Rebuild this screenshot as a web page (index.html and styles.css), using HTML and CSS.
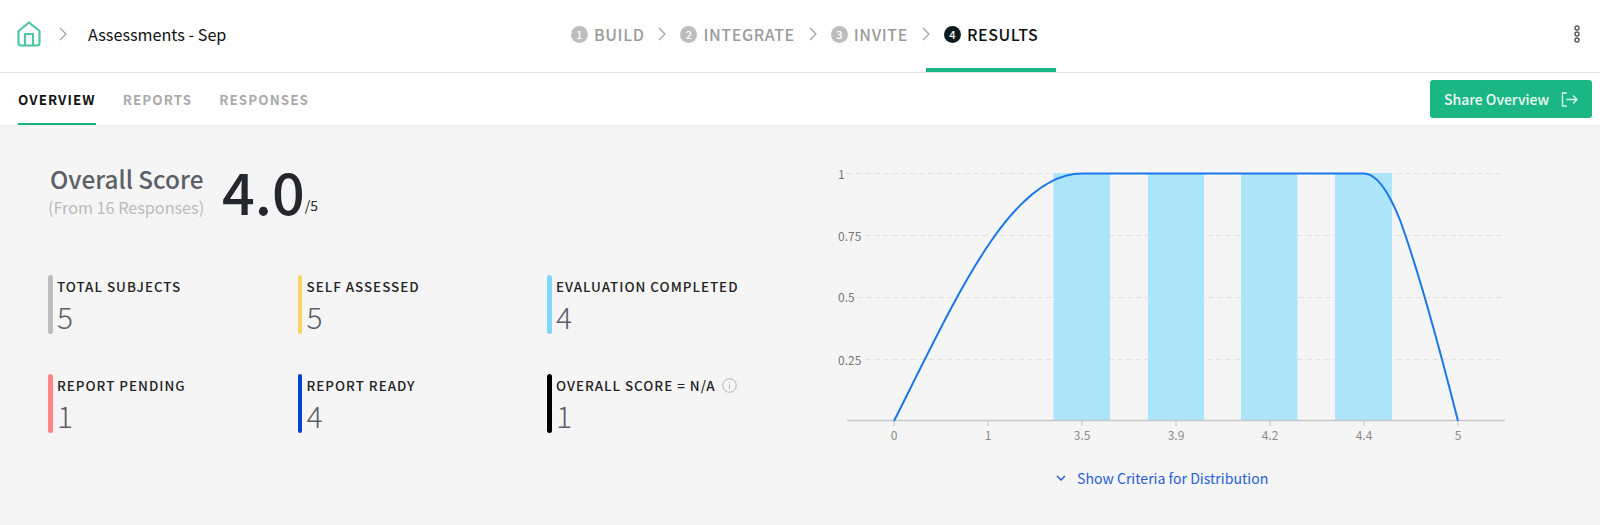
FILE: index.html
```html
<!DOCTYPE html>
<html lang="en">
<head>
    <meta charset="UTF-8">
    <meta name="viewport" content="width=device-width, initial-scale=1.0">
    <title>Assessments - Sep</title>
    <link rel="stylesheet" href="styles.css">
</head>
<body>

<header class="top-bar">
    <div class="crumbs">
        <svg class="home-icon" width="24" height="26" viewBox="0 0 24 26" fill="none" stroke="#4fc79c" stroke-width="2.2" stroke-linejoin="round">
            <path d="M12 1.5 L22.5 10 V22 Q22.5 24.5 20 24.5 H4 Q1.5 24.5 1.5 22 V10 Z"/>
            <path d="M8 24.5 V13 H16 V24.5"/>
        </svg>
        <svg class="chevron crumb-chevron" width="8" height="14" viewBox="0 0 8 14"><path d="M1 1 L7 7 L1 13"/></svg>
        <span class="crumb-title">Assessments - Sep</span>
    </div>

    <nav class="steps">
        <div class="step"><span class="step-num">1</span>BUILD</div>
        <svg class="chevron" width="8" height="14" viewBox="0 0 8 14"><path d="M1 1 L7 7 L1 13"/></svg>
        <div class="step"><span class="step-num">2</span>INTEGRATE</div>
        <svg class="chevron" width="8" height="14" viewBox="0 0 8 14"><path d="M1 1 L7 7 L1 13"/></svg>
        <div class="step"><span class="step-num">3</span>INVITE</div>
        <svg class="chevron" width="8" height="14" viewBox="0 0 8 14"><path d="M1 1 L7 7 L1 13"/></svg>
        <div class="step active"><span class="step-num">4</span>RESULTS</div>
    </nav>

    <svg class="more-icon" width="8" height="18" viewBox="0 0 8 18" fill="none" stroke="#55595f" stroke-width="1.4">
        <circle cx="4" cy="3" r="2"/>
        <circle cx="4" cy="9" r="2"/>
        <circle cx="4" cy="15" r="2"/>
    </svg>
</header>

<div class="sub-bar">
    <div class="tabs">
        <a class="tab active">OVERVIEW</a>
        <a class="tab">REPORTS</a>
        <a class="tab">RESPONSES</a>
    </div>
    <button class="share-button">Share Overview
        <svg width="17" height="15" viewBox="0 0 17 15" fill="none" stroke="#d5f2e8" stroke-width="1.4">
            <path d="M6 1 H1.5 V14 H6"/>
            <path d="M5.5 7.5 H16 M12 3.5 L16 7.5 L12 11.5"/>
        </svg>
    </button>
</div>

<main class="content">
    <section class="summary">
        <div class="score">
            <div class="score-text">
                <div class="score-title">Overall Score</div>
                <div class="score-sub">(From 16 Responses)</div>
            </div>
            <div class="score-value">4.0</div>
            <div class="score-max">/5</div>
        </div>

        <div class="stats">
            <div class="stat stat-grey">
                <div>
                    <div class="stat-label">TOTAL SUBJECTS</div>
                    <div class="stat-value">5</div>
                </div>
            </div>
            <div class="stat stat-yellow">
                <div>
                    <div class="stat-label">SELF ASSESSED</div>
                    <div class="stat-value">5</div>
                </div>
            </div>
            <div class="stat stat-sky">
                <div>
                    <div class="stat-label">EVALUATION COMPLETED</div>
                    <div class="stat-value">4</div>
                </div>
            </div>
            <div class="stat stat-pink">
                <div>
                    <div class="stat-label">REPORT PENDING</div>
                    <div class="stat-value">1</div>
                </div>
            </div>
            <div class="stat stat-blue">
                <div>
                    <div class="stat-label">REPORT READY</div>
                    <div class="stat-value">4</div>
                </div>
            </div>
            <div class="stat stat-black">
                <div>
                    <div class="stat-label">OVERALL SCORE = N/A
                        <svg class="info-icon" width="15" height="15" viewBox="0 0 15 15" fill="none" stroke="#b5b5b5">
                            <circle cx="7.5" cy="7.5" r="6.8"/>
                            <path d="M7.5 6.5 V11 M7.5 4 V5"/>
                        </svg>
                    </div>
                    <div class="stat-value">1</div>
                </div>
            </div>
        </div>
    </section>

    <section class="chart-panel">
        <svg class="chart" width="680" height="300" viewBox="830 150 680 300">
            <g class="grid">
                <path d="M847 173.5 H1502"/>
                <path d="M865 235.5 H1502"/>
                <path d="M857 297.5 H1502"/>
                <path d="M865 359.5 H1502"/>
            </g>
            <g class="bars">
                <rect x="1053.5" y="173" width="56.5" height="248"/>
                <rect x="1148" y="173" width="56" height="248"/>
                <rect x="1241" y="173" width="56.5" height="248"/>
                <rect x="1335" y="173" width="57" height="248"/>
            </g>
            <g class="axis">
                <path class="axis-line" d="M847 420.5 H1505"/>
                <path d="M894 421 V426 M988 421 V426 M1082 421 V426 M1176 421 V426 M1270 421 V426 M1364 421 V426 M1458 421 V426"/>
            </g>
            <path class="curve" d="M894 421 C955 300 1010 173.5 1082 173.5 H1364 C1378 173.5 1390 195 1400 220 C1420 275 1440 350 1458 421"/>
            <g class="y-labels">
                <text x="838" y="179">1</text>
                <text x="838" y="241">0.75</text>
                <text x="838" y="302">0.5</text>
                <text x="838" y="365">0.25</text>
            </g>
            <g class="x-labels">
                <text x="894" y="440">0</text>
                <text x="988" y="440">1</text>
                <text x="1082" y="440">3.5</text>
                <text x="1176" y="440">3.9</text>
                <text x="1270" y="440">4.2</text>
                <text x="1364" y="440">4.4</text>
                <text x="1458" y="440">5</text>
            </g>
        </svg>
        <a class="criteria-link">
            <svg width="10" height="6" viewBox="0 0 10 6" fill="none" stroke="#2460d8" stroke-width="1.5"><path d="M1 1 L5 5 L9 1"/></svg>
            Show Criteria for Distribution
        </a>
    </section>
</main>

</body>
</html>
```

FILE: styles.css
```css
* {
    box-sizing: border-box;
}

html, body {
    height: 100%;
}

body {
    margin: 0;
    background-color: #f5f5f5;
    color: #111;
    font-family: 'Noto Sans CJK SC', 'Noto Sans', sans-serif;
    display: flex;
    flex-direction: column;
    overflow: hidden;
}

.top-bar {
    height: 73px;
    flex: none;
    background-color: #fff;
    border-bottom: 1px solid #e4e4e4;
    display: flex;
    align-items: center;
    padding: 0 0 4px 17px;
}

.crumbs {
    width: 554px;
    display: flex;
    align-items: center;
    flex: none;
}

.crumb-title {
    font-size: 16.2px;
    line-height: 24px;
    color: #111;
    margin-left: 21px;
}

.crumb-chevron {
    margin-left: 18px;
}

.chevron {
    flex: none;
    fill: none;
    stroke: #9a9a9a;
    stroke-width: 1.1;
}

.steps {
    display: flex;
    align-items: center;
    align-self: stretch;
    gap: 14px;
    margin-bottom: -4px;
    padding-bottom: 4px;
}

.step {
    display: flex;
    align-items: center;
    font-size: 16px;
    font-weight: 500;
    letter-spacing: 0.6px;
    color: #9b9b9b;
}

.step-num {
    flex: none;
    width: 17px;
    height: 17px;
    border-radius: 50%;
    background-color: #bdbdbd;
    color: #fff;
    font-size: 11px;
    letter-spacing: 0;
    line-height: 17px;
    text-align: center;
    margin-right: 6px;
}

.step.active {
    color: #111;
    align-self: stretch;
    border-bottom: 4px solid #1ab585;
    margin: 0 0 -4px -18px;
    padding-left: 18px;
    width: 130px;
}

.step.active .step-num {
    background-color: #0d1c20;
}

.more-icon {
    margin-left: auto;
    margin-right: 19px;
}

.sub-bar {
    height: 53px;
    flex: none;
    background-color: #fff;
    border-bottom: 1px solid #ececec;
    display: flex;
    align-items: center;
    justify-content: space-between;
    padding: 0 8px 0 18px;
}

.tabs {
    display: flex;
    align-self: stretch;
    gap: 27px;
}

.tab {
    display: flex;
    align-items: center;
    font-size: 13.4px;
    font-weight: 700;
    letter-spacing: 1.1px;
    color: #aaa;
    padding-top: 1px;
    padding-bottom: 2px;
}

.tab.active {
    color: #111;
    border-bottom: 2px solid #1ab585;
    padding-bottom: 0;
}

.share-button {
    width: 162px;
    height: 38px;
    background-color: #1ab785;
    color: #eefaf6;
    border: none;
    border-radius: 3px;
    font-family: inherit;
    font-size: 14px;
    font-weight: 500;
    display: flex;
    align-items: center;
    justify-content: center;
    gap: 12px;
}

.content {
    flex: 1;
    display: flex;
}

.summary {
    width: 830px;
    flex: none;
    padding: 36px 0 0 48px;
}

.score {
    display: flex;
    align-items: flex-start;
}

.score-text {
    width: 174px;
}

.score-title {
    font-size: 24.3px;
    line-height: 34px;
    font-weight: 500;
    color: #5b6068;
    margin-left: 2px;
}

.score-sub {
    font-size: 16.2px;
    line-height: 22px;
    color: #bbb;
}

.score-value {
    font-size: 57.5px;
    line-height: 56px;
    font-weight: 500;
    color: #24272c;
}

.score-max {
    font-size: 14px;
    line-height: 18px;
    margin-top: 34px;
    color: #24272c;
}

.stats {
    margin-top: 57px;
    display: grid;
    grid-template-columns: repeat(3, 249.5px);
    grid-auto-rows: 59px;
    row-gap: 40px;
}

.stat {
    display: flex;
    gap: 4.5px;
}

.stat::before {
    content: "";
    flex: none;
    width: 4.5px;
    border-radius: 3px;
}

.stat-grey::before { background-color: #bdbdbd; }
.stat-yellow::before { background-color: #fbd461; }
.stat-sky::before { background-color: #7fd8f8; }
.stat-pink::before { background-color: #ff8585; }
.stat-blue::before { background-color: #0a40d0; }
.stat-black::before { background-color: #000; }

.stat-label {
    font-size: 13.4px;
    line-height: 18px;
    font-weight: 500;
    letter-spacing: 1px;
    color: #222;
    margin-top: 2px;
    display: flex;
    align-items: center;
    gap: 6px;
}

.stat-value {
    font-size: 30px;
    line-height: 36px;
    font-weight: 300;
    color: #5b6068;
    margin-top: 3px;
}

.chart-panel {
    flex: 1;
    display: flex;
    flex-direction: column;
    align-items: flex-start;
    padding-top: 24px;
}

.chart {
    display: block;
}

.grid path {
    stroke: #e2e2e2;
    stroke-width: 1;
    stroke-dasharray: 6 3;
    fill: none;
}

.bars rect {
    fill: #ade5fb;
}

.axis path {
    stroke: #c8c8c8;
    fill: none;
}

.axis .axis-line {
    stroke-width: 1.5;
}

.curve {
    stroke: #1a78ea;
    stroke-width: 2;
    fill: none;
}

.y-labels text,
.x-labels text {
    font-size: 12px;
    fill: #777;
}

.x-labels text {
    text-anchor: middle;
    fill: #8a8a8a;
}

.criteria-link {
    display: flex;
    align-items: center;
    gap: 11px;
    margin: 18px 0 0 226px;
    font-size: 14.1px;
    line-height: 20px;
    color: #2460d8;
}
```
